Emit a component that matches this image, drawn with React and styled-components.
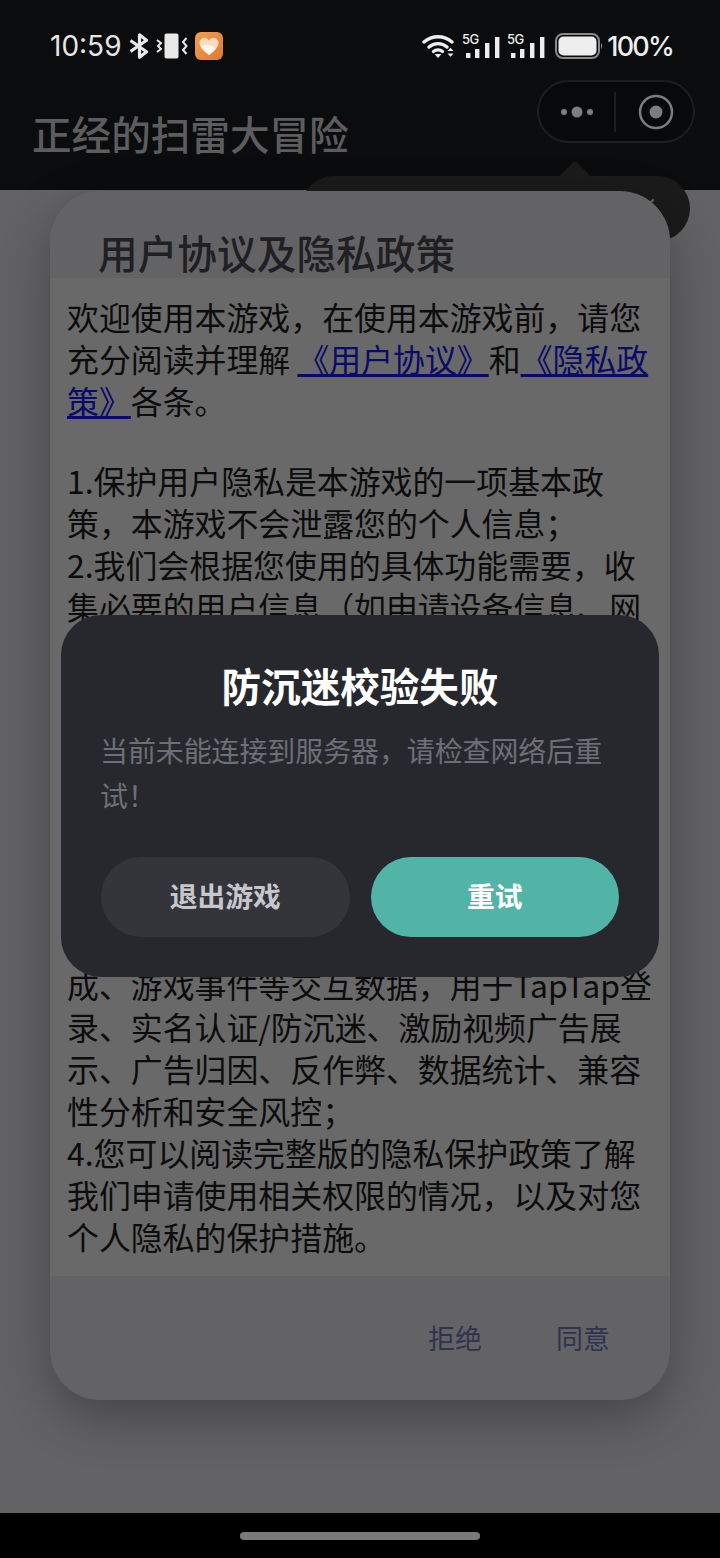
import React from 'react';
import styled, { createGlobalStyle } from 'styled-components';

const CJK = `"Noto Sans CJK SC", "Noto Sans", sans-serif`;

const GlobalStyle = createGlobalStyle`
  html, body {
    margin: 0;
    padding: 0;
    background: #000;
  }
  * {
    box-sizing: border-box;
  }
`;

const BluetoothIcon = () => (
  <svg width="20" height="26" viewBox="0 0 20 26" fill="none" stroke="#e8e8e8" strokeWidth="3.2">
    <path d="M1.5 7.5 L17.5 18.8 L10.5 24.2 V1.8 L17.5 7.2 L1.5 18.5" strokeLinejoin="round" />
  </svg>
);

const VibrateIcon = () => (
  <svg width="32" height="26" viewBox="0 0 32 26" fill="none" stroke="#e8e8e8" strokeWidth="2">
    <rect x="8.5" y="0.5" width="14" height="25" rx="2" fill="#e8e8e8" stroke="none" />
    <path d="M1 7 L5 10 L2 13 L5 16 L1 19" />
    <path d="M30.5 5 L27 9 L30.5 13 L27 17 L30.5 21" />
  </svg>
);

const HeartAppIcon = () => (
  <svg width="28" height="28" viewBox="0 0 28 28">
    <defs>
      <linearGradient id="heartBg" x1="0" y1="0" x2="1" y2="1">
        <stop offset="0" stopColor="#f2a04f" />
        <stop offset="1" stopColor="#dd7a30" />
      </linearGradient>
    </defs>
    <rect width="28" height="28" rx="6" fill="url(#heartBg)" />
    <path d="M14 23 C8 18.5 4.5 15 4.5 11 C4.5 7.8 7 5.8 9.6 5.8 C11.5 5.8 13 6.8 14 8.4 C15 6.8 16.5 5.8 18.4 5.8 C21 5.8 23.5 7.8 23.5 11 C23.5 15 20 18.5 14 23 Z" fill="#fbdcc0" />
    <path d="M14 23 C10 20 7.5 17.5 6 15 C9 12.5 13 12 17 14 C19 15 20.5 16 21 16.5 C19.5 18.5 17 20.8 14 23 Z" fill="#fff6ee" />
  </svg>
);

const WifiIcon = () => (
  <svg width="33" height="24" viewBox="0 0 33 24" fill="none" stroke="#eeeeee" strokeWidth="3.4" strokeLinecap="round">
    <path d="M2 8 C10 1 22 1 30 8" />
    <path d="M7 13 C12 8.5 20 8.5 25 13" />
    <path d="M11.5 17.5 C14 15.5 18 15.5 20.5 17.5" />
    <path d="M12.5 20 L16 24 L19.5 20 Z" fill="#eeeeee" stroke="none" />
    <path d="M25.5 17 L28.5 13.8 L31.5 17 Z M25.5 19.5 L28.5 22.7 L31.5 19.5 Z" fill="#eeeeee" stroke="none" />
  </svg>
);

const SignalIcon = () => (
  <SignalSvg width="38" height="34" viewBox="0 -8 38 34">
    <text x="0" y="10.5" fontFamily="Inter, sans-serif" fontSize="13" fontWeight="500" letterSpacing="-0.5" fill="#eeeeee">5G</text>
    <rect x="4" y="20" width="4.4" height="5" fill="#eeeeee" />
    <rect x="13" y="16" width="4.4" height="9" fill="#eeeeee" />
    <rect x="23" y="10" width="4.4" height="15" fill="#eeeeee" />
    <rect x="33" y="4" width="4.4" height="21" fill="#eeeeee" />
  </SignalSvg>
);

const BatteryIcon = () => (
  <svg width="51" height="26" viewBox="0 0 51 26">
    <rect x="4" y="1" width="43" height="24" rx="7" fill="none" stroke="#8a8a8a" strokeWidth="2" />
    <rect x="6.5" y="3.5" width="38" height="19" rx="5" fill="#eeeeee" />
    <path d="M49 10 C50.5 11 50.5 15 49 16 Z" fill="#8a8a8a" />
  </svg>
);

const CapsuleDots = () => (
  <svg width="36" height="14" viewBox="0 0 36 14" fill="#7d7d7d">
    <circle cx="5" cy="7" r="3" />
    <circle cx="18" cy="7" r="5.5" />
    <circle cx="31" cy="7" r="3" />
  </svg>
);

const CapsuleTarget = () => (
  <svg width="36" height="36" viewBox="0 0 36 36" fill="none">
    <circle cx="18" cy="18" r="16" stroke="#7d7d7d" strokeWidth="2.5" />
    <circle cx="18" cy="18" r="6.5" fill="#7d7d7d" />
  </svg>
);

export default function App() {
  return (
    <Screen>
      <GlobalStyle />
      <TopBar>
        <StatusBar>
          <StatusGroup>
            <Clock>10:59</Clock>
            <BluetoothIcon />
            <VibrateIcon />
            <HeartAppIcon />
          </StatusGroup>
          <StatusGroup>
            <WifiIcon />
            <SignalIcon />
            <SignalIcon />
            <BatteryIcon />
            <Percent>100%</Percent>
          </StatusGroup>
        </StatusBar>
        <NavRow>
          <GameTitle>正经的扫雷大冒险</GameTitle>
          <Capsule>
            <CapsuleMenu>
              <CapsuleDots />
            </CapsuleMenu>
            <CapsuleDivider />
            <CapsuleClose>
              <CapsuleTarget />
            </CapsuleClose>
          </Capsule>
        </NavRow>
        <Tooltip>
          <TooltipClose />
        </Tooltip>
      </TopBar>

      <Main>
        <PolicyCard>
          <CardHeader>用户协议及隐私政策</CardHeader>
          <CardBody>
            <p>
              欢迎使用本游戏，在使用本游戏前，请您充分阅读并理解 <PolicyLink>《用户协议》</PolicyLink>和<PolicyLink>《隐私政策》</PolicyLink>各条。
            </p>
            <ParaGap />
            <p>1.保护用户隐私是本游戏的一项基本政策，本游戏不会泄露您的个人信息；</p>
            <p>
              2.我们会根据您使用的具体功能需要，收集必要的用户信息（如申请设备信息、网络状态、存储权限等），未经您的同意不会收集与功能无关的信息，也不会向第三方提供您的个人信息，除非法律法规另有规定，您可以随时查询、更正或删除您的信息，我们将按照相关规定及时处理；
            </p>
            <p>
              3.本游戏接入了第三方服务，可能会收集您的设备标识符、网络信息、应用列表、登录状态、充值记录、游戏时长、关卡完成、游戏事件等交互数据，用于TapTap登录、实名认证/防沉迷、激励视频广告展示、广告归因、反作弊、数据统计、兼容性分析和安全风控；
            </p>
            <p>4.您可以阅读完整版的隐私保护政策了解我们申请使用相关权限的情况，以及对您个人隐私的保护措施。</p>
          </CardBody>
          <CardFooter>
            <TextButton>拒绝</TextButton>
            <TextButton>同意</TextButton>
          </CardFooter>
        </PolicyCard>
      </Main>

      <BottomBar>
        <HomeIndicator />
      </BottomBar>

      <DialogLayer>
        <Dialog>
          <DialogTitle>防沉迷校验失败</DialogTitle>
          <DialogText>当前未能连接到服务器，请检查网络后重试！</DialogText>
          <DialogActions>
            <DialogButton>退出游戏</DialogButton>
            <DialogButton $primary>重试</DialogButton>
          </DialogActions>
        </Dialog>
      </DialogLayer>
    </Screen>
  );
}

// STYLES
const Screen = styled.div`
  position: relative;
  width: 720px;
  height: 1558px;
  display: flex;
  flex-direction: column;
  overflow: hidden;
  background: #636365;
  font-family: ${CJK};
`;

const TopBar = styled.header`
  position: relative;
  z-index: 1;
  height: 190px;
  flex-shrink: 0;
  background: #0b0c0e;
`;

const StatusBar = styled.div`
  height: 80px;
  padding: 31px 47px 0 50px;
  display: flex;
  justify-content: space-between;
  align-items: flex-start;
`;

const StatusGroup = styled.div`
  display: flex;
  align-items: center;
  height: 30px;
  gap: 7px;
`;

const SignalSvg = styled.svg`
  margin-top: -8px;
`;

const Clock = styled.span`
  font-family: Inter, sans-serif;
  font-size: 28px;
  font-weight: 400;
  color: #e6e6e6;
`;

const Percent = styled.span`
  margin-left: -3px;
  font-family: Inter, sans-serif;
  font-size: 27px;
  font-weight: 500;
  letter-spacing: -1.8px;
  color: #eeeeee;
`;

const NavRow = styled.div`
  padding: 0 25px 0 32px;
  display: flex;
  justify-content: space-between;
  align-items: flex-start;
`;

const GameTitle = styled.h1`
  margin: 24px 0 0;
  font-size: 39.6px;
  line-height: 58px;
  font-weight: 500;
  color: #5d5d5f;
`;

const Capsule = styled.div`
  width: 158px;
  height: 63px;
  display: flex;
  align-items: center;
  border: 2px solid #1d1e20;
  border-radius: 32px;
  background: #08090b;
`;

const CapsuleMenu = styled.div`
  width: 75px;
  display: flex;
  justify-content: center;
  align-items: center;
`;

const CapsuleClose = styled.div`
  flex: 1;
  padding-left: 3px;
  display: flex;
  justify-content: center;
  align-items: center;
`;

const CapsuleDivider = styled.div`
  width: 2px;
  height: 40px;
  background: #1d1e20;
`;

const Tooltip = styled.div`
  position: absolute;
  top: 176px;
  left: 301px;
  width: 389px;
  height: 65px;
  border-radius: 33px;
  background: #1b1b1c;

  &::before {
    content: '';
    position: absolute;
    top: -11px;
    left: 263px;
    width: 22px;
    height: 22px;
    border-radius: 3px;
    transform: rotate(45deg);
    background: #1b1b1c;
  }
`;

const TooltipClose = styled.span`
  position: absolute;
  top: 22px;
  left: 349px;
  width: 2px;
  height: 8px;
  transform: rotate(45deg);
  background: #666666;
`;

const Main = styled.main`
  flex: 1;
  padding-top: 1px;
  display: flex;
  justify-content: center;
  align-items: flex-start;
`;

const PolicyCard = styled.section`
  position: relative;
  z-index: 2;
  width: 620px;
  height: 1209px;
  display: flex;
  flex-direction: column;
  border-radius: 50px;
  overflow: hidden;
  background: #636365;
  box-shadow: 0 18px 50px rgba(0, 0, 0, 0.3);
`;

const CardHeader = styled.h2`
  margin: 0;
  height: 87px;
  padding: 32px 0 0 48px;
  font-size: 39.7px;
  line-height: 58px;
  font-weight: 500;
  color: #202022;
`;

const CardBody = styled.div`
  flex: 1;
  padding: 16.5px 10px 0 17px;
  font-size: 31.9px;
  line-height: 42px;
  color: #0c0c0c;
  background: #696969;

  p {
    margin: 0;
  }
`;

const ParaGap = styled.div`
  height: 38px;
`;

const PolicyLink = styled.span`
  color: #0a0a6b;
  text-decoration: underline;
`;

const CardFooter = styled.div`
  height: 124px;
  padding: 40px 60px 0 0;
  display: flex;
  justify-content: flex-end;
  align-items: flex-start;
  gap: 74px;
`;

const TextButton = styled.span`
  font-size: 27px;
  line-height: 44px;
  color: #2f3350;
`;

const BottomBar = styled.footer`
  position: relative;
  z-index: 3;
  height: 45px;
  flex-shrink: 0;
  padding-top: 19px;
  display: flex;
  justify-content: center;
  align-items: flex-start;
  background: #000000;
`;

const HomeIndicator = styled.div`
  width: 240px;
  height: 8px;
  border-radius: 4px;
  background: #7a7a7a;
`;

const DialogLayer = styled.div`
  position: absolute;
  z-index: 4;
  top: 615px;
  left: 0;
  width: 100%;
  display: flex;
  justify-content: center;
`;

const Dialog = styled.div`
  width: 598px;
  height: 362px;
  padding: 41px 40px 0;
  border-radius: 40px;
  background: #27282e;
`;

const DialogTitle = styled.h3`
  margin: 0;
  text-align: center;
  font-size: 39.6px;
  line-height: 58px;
  font-weight: 700;
  color: #ffffff;
`;

const DialogText = styled.p`
  margin: 13.5px 0 0 -1px;
  height: 90px;
  font-size: 27.9px;
  line-height: 45px;
  color: #6d6f78;
`;

const DialogActions = styled.div`
  margin-top: 39.5px;
  display: flex;
  gap: 21px;
`;

const DialogButton = styled.div`
  flex: 1;
  height: 80px;
  padding-bottom: 5px;
  display: flex;
  justify-content: center;
  align-items: center;
  border-radius: 40px;
  font-size: 27.8px;
  font-weight: 700;
  color: ${({ $primary }) => ($primary ? '#ffffff' : '#c6c7cd')};
  background: ${({ $primary }) => ($primary ? '#52b4a6' : '#34353b')};
`;
